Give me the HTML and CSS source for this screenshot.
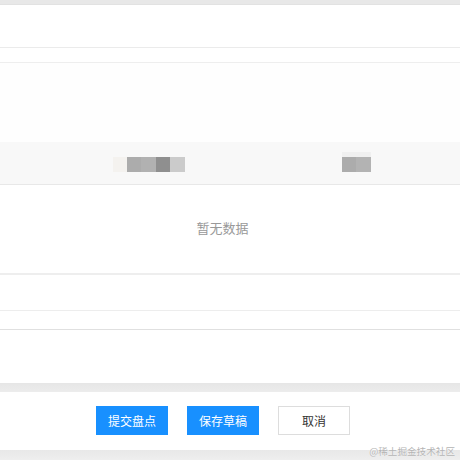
FILE: index.html
```html
<!DOCTYPE html>
<html lang="zh">
<head>
<meta charset="utf-8">
<title>盘点</title>
<link rel="stylesheet" href="styles.css">
</head>
<body>
<div class="page">
  <div class="topbar"></div>
  <div class="block-a"></div>
  <div class="block-b"></div>
  <div class="block-c"></div>
  <div class="thead">
    <div class="th th1">
      <span class="mosaic">
        <i class="m m-l"></i><i class="m m-g1"></i><i class="m m-g2"></i><i class="m m-d"></i><i class="m m-x"></i>
      </span>
    </div>
    <div class="th th2">
      <span class="mosaic mosaic2">
        <i class="m m-g1"></i><i class="m m-g3"></i>
      </span>
    </div>
  </div>
  <div class="empty">暂无数据</div>
  <div class="row-a"></div>
  <div class="row-b"></div>
  <div class="block-d"></div>
  <div class="band"></div>
  <div class="footer">
    <button class="btn btn-primary">提交盘点</button>
    <button class="btn btn-primary">保存草稿</button>
    <button class="btn btn-default">取消</button>
  </div>
  <div class="bottombar"></div>
  <div class="watermark">@稀土掘金技术社区</div>
</div>
</body>
</html>
```
FILE: styles.css
```css
html, body {
  margin: 0;
  padding: 0;
  background: #ffffff;
}
body {
  font-family: "Noto Sans CJK SC", "Noto Sans", sans-serif;
  width: 460px;
  height: 460px;
  overflow: hidden;
}
.page {
  position: relative;
  width: 460px;
  height: 460px;
  display: flex;
  flex-direction: column;
}
.topbar {
  height: 4px;
  background: #e8e8e8;
  border-bottom: 1px solid #e2e2e2;
}
.block-a {
  height: 42px;
  border-bottom: 1px solid #ebebeb;
}
.block-b {
  height: 14px;
  border-bottom: 1px solid #eeeeee;
}
.block-c {
  height: 79px;
  background: #fefefe;
}
.thead {
  height: 42px;
  background: #f8f8f8;
  border-bottom: 1px solid #e8e8e8;
  display: grid;
  grid-template-columns: 298px 116px 1fr;
  align-items: center;
}
.th {
  display: flex;
  justify-content: center;
}
.mosaic {
  display: flex;
  height: 15px;
  margin-top: 3px;
}
.mosaic2 {
  border-top: 5px solid #f0f0f0;
  margin-top: -2px;
}
.m {
  display: block;
  height: 15px;
}
.m-l { width: 14px; background: #f4f2ef; }
.m-g1 { width: 14px; background: #acacac; }
.m-g2 { width: 15px; background: #b1b1b1; }
.m-d { width: 14px; background: #8f8f8f; }
.m-x { width: 15px; background: #cbcbcb; }
.m-g3 { width: 15px; background: #b3b3b3; }
.empty {
  height: 90px;
  box-sizing: border-box;
  padding: 0 15px 3px 0;
  display: flex;
  align-items: center;
  justify-content: center;
  font-size: 13px;
  color: #999999;
  border-bottom: 2px solid #eeeeee;
}
.row-a {
  height: 35px;
  border-bottom: 1px solid #ededed;
}
.row-b {
  height: 18px;
  border-bottom: 1px solid #e0e0e0;
}
.block-d {
  height: 53px;
}
.band {
  height: 9px;
  background: linear-gradient(#e6e6e6, #ececec);
}
.footer {
  height: 58px;
  display: flex;
  align-items: flex-start;
  padding: 14px 0 0 96px;
  box-sizing: border-box;
  gap: 19px;
}
.btn {
  width: 72px;
  height: 29px;
  font-family: "Noto Sans CJK SC", "Noto Sans", sans-serif;
  font-size: 12px;
  border-radius: 0;
  padding: 0;
  cursor: pointer;
}
.btn-primary {
  background: #1890ff;
  color: #ffffff;
  border: 1px solid #1890ff;
}
.btn-default {
  background: #ffffff;
  color: #333333;
  border: 1px solid #dddddd;
}
.bottombar {
  height: 10px;
  background: linear-gradient(#e8e8e8, #eeeeee);
}
.watermark {
  position: absolute;
  right: 5px;
  bottom: 3px;
  font-size: 9.6px;
  line-height: 12px;
  color: #b4b4b4;
  text-shadow: 0 0 1px #ffffff;
}
```
